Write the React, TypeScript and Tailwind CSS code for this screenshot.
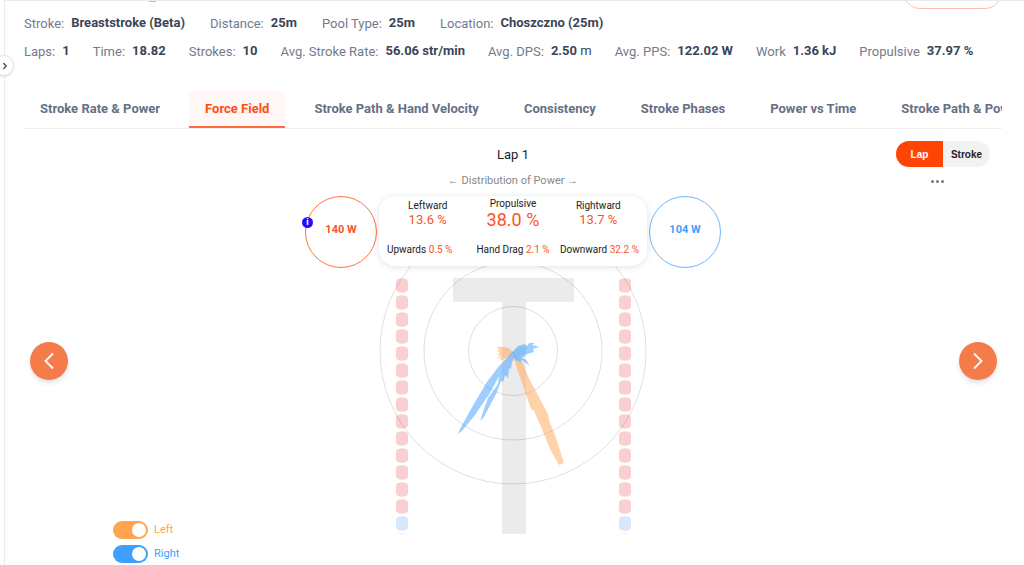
import { useState } from "react";
import { ChevronRight } from "lucide-react";
import clsx from "clsx";

interface Stat {
  label: string;
  value: string;
  unit?: string;
}

const SESSION: Stat[] = [
  { label: "Stroke:", value: "Breaststroke (Beta)" },
  { label: "Distance:", value: "25m" },
  { label: "Pool Type:", value: "25m" },
  { label: "Location:", value: "Choszczno (25m)" },
];

const SUMMARY: Stat[] = [
  { label: "Laps:", value: "1" },
  { label: "Time:", value: "18.82" },
  { label: "Strokes:", value: "10" },
  { label: "Avg. Stroke Rate:", value: "56.06 str/min" },
  { label: "Avg. DPS:", value: "2.50", unit: "m" },
  { label: "Avg. PPS:", value: "122.02 W" },
  { label: "Work", value: "1.36 kJ" },
  { label: "Propulsive", value: "37.97 %" },
];

const TABS = [
  "Stroke Rate & Power",
  "Force Field",
  "Stroke Path & Hand Velocity",
  "Consistency",
  "Stroke Phases",
  "Power vs Time",
  "Stroke Path & Power",
];

function StatRow({ items, className }: { items: Stat[]; className: string }) {
  return (
    <dl className={clsx("flex whitespace-nowrap text-[13px] leading-5", className)}>
      {items.map((item) => (
        <div key={item.label} className="flex gap-[7px]">
          <dt className="leading-[22px] text-[#737b8b]">{item.label}</dt>
          <dd className="font-bold text-[#3b4558]">
            {item.value}
            {item.unit && <span className="font-normal"> {item.unit}</span>}
          </dd>
        </div>
      ))}
    </dl>
  );
}

function Metric({ label, value, big }: { label: string; value: string; big?: boolean }) {
  return (
    <div className={clsx("flex flex-col items-center", !big && "pt-[2px]")}>
      <span className="text-[10px] leading-3 text-[#222]">{label}</span>
      <span className={clsx("text-[#f9531f]", big ? "text-[18px] leading-5" : "text-[13px] leading-4")}>{value}</span>
    </div>
  );
}

function MinorMetric({ label, value }: { label: string; value: string }) {
  return (
    <span className="text-[10px] leading-3 text-[#222]">
      {label} <span className="text-[#f9531f]">{value}</span>
    </span>
  );
}

function NavButton({ direction }: { direction: "left" | "right" }) {
  return (
    <button
      type="button"
      aria-label={direction === "left" ? "Previous lap" : "Next lap"}
      className="flex size-[38px] items-center justify-center rounded-full bg-[#f47c4b] text-white shadow-md shadow-black/10"
    >
      <svg width="10" height="18" viewBox="0 0 10 18" fill="none" stroke="currentColor" strokeWidth="1.8">
        <path d={direction === "left" ? "M9 1.500 1.500 9 9 16.500" : "M1 1.500 8.500 9 1 16.500"} />
      </svg>
    </button>
  );
}

function HandSwitch({
  label,
  checked,
  onChange,
  color,
}: {
  label: string;
  checked: boolean;
  onChange: (v: boolean) => void;
  color: "orange" | "blue";
}) {
  return (
    <label className={clsx("flex items-center gap-[6px] text-[11px] leading-[18px]", color === "orange" ? "text-[#ffa550]" : "text-[#409eff]")}>
      <input
        type="checkbox"
        role="switch"
        checked={checked}
        onChange={(e) => onChange(e.target.checked)}
        className={clsx(
          "flex h-[18px] w-[35px] appearance-none items-center rounded-full px-[2px] before:size-[14px] before:rounded-full before:bg-white checked:justify-end",
          color === "orange" ? "bg-[#ffa550]" : "bg-[#409eff]"
        )}
      />
      {label}
    </label>
  );
}

/** Column of lane rope floats, the last one in blue. */
function LaneRope({ x }: { x: number }) {
  return (
    <g>
      {Array.from({ length: 15 }, (_, i) => (
        <path
          key={i}
          transform={`translate(${x} ${12 + i * 17})`}
          d="M2.500 .7Q6-.2 9.500 .7 12 1.200 12 4V11Q12 13.800 9.500 14.300 6 15.200 2.500 14.300 0 13.800 0 11V4Q0 1.200 2.500 .7Z"
          fill={i === 14 ? "#d8e8fa" : "#f9cfd0"}
        />
      ))}
      <path d={`M${x + 2} 268Q${x + 6} 266 ${x + 10} 268Z`} fill="#eee" />
    </g>
  );
}

function ForceField({ left, right }: { left: boolean; right: boolean }) {
  return (
    <svg className="-mt-[2px] block" width="268" height="268" viewBox="379 266 268 268" role="img" aria-label="Force field">
      <g transform="translate(0 266)">
        <LaneRope x={396} />
        <LaneRope x={619} />
      </g>
      <path d="M453 278H574V302H526V534H502V302H453Z" fill="#ebebeb" />
      <g fill="none" stroke="#000" strokeOpacity=".13">
        <circle cx="513" cy="351" r="44.500" />
        <circle cx="513" cy="351" r="89" />
        <circle cx="513" cy="351" r="133" />
      </g>
      {left && (
        <g fill="#ff9c40" fillOpacity=".45">
          <path d="M513 352 518 361 522 361 527 374 533 386 541 401 548 414 549 420 556 438 564 463 559 465 550 449 542 429 534 411 531 409 525 392 520 377 514 359Z" />
          <path d="M513 352 509 348 503 347 497 347 499 350 497 351 500 353 497 355 501 355 496 359 502 357 499 361 506 358 511 356Z" />
        </g>
      )}
      {right && (
        <g fill="#3b9eff" fillOpacity=".5">
          <path d="M513 351 506 359 499 366 487 382 475 402 461 427 458 434 462 431 475 415 490 393 499 376 498 384 488 398 484 409 480 421 484 417 497 392 501 381 503 382 505 375 508 378 509 368 511 369 512 362 515 357Z" />
          <path d="M513 351 518 346 525 344 527 346 529 343 535 343 532 345 539 347 533 349 534 352 527 354 522 358 526 360 530 366 522 360 520 362 516 360Z" />
          <path d="M512 352 520 348 528 347 525 353 519 356 521 361 515 360Z" fillOpacity=".15" />
        </g>
      )}
    </svg>
  );
}

export default function App() {
  const [activeTab, setActiveTab] = useState("Force Field");
  const [mode, setMode] = useState("Lap");
  const [showLeft, setShowLeft] = useState(true);
  const [showRight, setShowRight] = useState(true);

  return (
    <div className="relative ml-1 min-h-screen overflow-hidden border-t border-l border-[#ebebeb] bg-white pr-[22px] pl-[19px] font-[Roboto,Arial,sans-serif]">
      {/* Sidebar handle */}
      <button
        type="button"
        aria-label="Open sidebar"
        className="fixed top-[55px] -left-[7px] flex size-[21px] items-center justify-center rounded-full border border-[#e4e4ea] bg-white pl-[3px] text-[#444] shadow-sm"
      >
        <ChevronRight size={10} strokeWidth={3} />
      </button>
      {/* Bottoms of the title and the action button scrolled under the top edge */}
      <div className="absolute -top-px left-[144px] h-[2px] w-[7px] bg-[#bbb]" />
      <button type="button" aria-label="Export" className="absolute -top-[26px] right-[22px] h-[34px] w-[99px] rounded-full border border-[#ffc0aa]" />

      <header className="flex flex-col gap-[6px] pt-3">
        <StatRow items={SESSION} className="gap-[25px]" />
        <StatRow items={SUMMARY} className="gap-[23px]" />
      </header>

      <nav className="mt-7 flex gap-[13px] overflow-hidden border-b border-[#f0f0f2] whitespace-nowrap">
        {TABS.map((tab) => (
          <button
            key={tab}
            type="button"
            onClick={() => setActiveTab(tab)}
            className={clsx(
              "h-[37px] shrink-0 border-b-2 px-4 text-[13px] leading-5 font-bold",
              tab === activeTab ? "border-[#ff6a3c] bg-[#fff8f6] text-[#ff4d12]" : "border-transparent text-[#667085]"
            )}
          >
            {tab}
          </button>
        ))}
      </nav>

      <main className="grid grid-cols-[1fr_auto_1fr]">
        <section className="flex flex-col pt-[213px]">
          <div className="pl-[6px]">
            <NavButton direction="left" />
          </div>
          <div className="mt-auto flex flex-col gap-[6px] pl-[89px]">
            <HandSwitch label="Left" checked={showLeft} onChange={setShowLeft} color="orange" />
            <HandSwitch label="Right" checked={showRight} onChange={setShowRight} color="blue" />
          </div>
        </section>

        <section className="flex flex-col items-center pb-[29px]">
          <h1 className="mt-4 text-[13px] leading-5 text-[#222]">Lap 1</h1>
          <p className="mt-[6px] text-[11px] leading-5 text-[#888]">← Distribution of Power →</p>
          <div className="mt-[5px] flex items-center gap-[2px]">
            <div className="relative flex size-[72px] items-center justify-center rounded-full border border-[#ff6f42] pb-1 text-[11px] font-bold text-[#f9531f]">
              140 W
              <button type="button" aria-label="Info" className="absolute top-5 -left-1 flex size-[11px] items-center justify-center rounded-full bg-[#2410f0] text-[9px] leading-none font-bold text-white">
                i
              </button>
            </div>
            <div className="z-10 flex h-[70px] w-[268px] flex-col justify-between self-start rounded-2xl bg-white px-2 pt-[2px] pb-[10px] shadow-[0_1px_6px_rgba(0,0,0,0.12)]">
              <div className="grid grid-cols-3 gap-1">
                <Metric label="Leftward" value="13.6 %" />
                <Metric label="Propulsive" value="38.0 %" big />
                <Metric label="Rightward" value="13.7 %" />
              </div>
              <div className="grid grid-cols-[1fr_auto_1fr] whitespace-nowrap">
                <MinorMetric label="Upwards" value="0.5 %" />
                <MinorMetric label="Hand Drag" value="2.1 %" />
                <div className="flex justify-end">
                  <MinorMetric label="Downward" value="32.2 %" />
                </div>
              </div>
            </div>
            <div className="flex size-[72px] items-center justify-center rounded-full border border-[#6db6ff] pb-1 text-[11px] font-bold text-[#409eff]">
              104 W
            </div>
          </div>
          <ForceField left={showLeft} right={showRight} />
        </section>

        <section className="flex flex-col items-end pt-3">
          <div className="mr-3 flex h-[26px] overflow-hidden rounded-full bg-[#f2f2f2] font-['Liberation_Sans',Arial,sans-serif] text-[10px] font-bold">
            {["Lap", "Stroke"].map((m) => (
              <button
                key={m}
                type="button"
                onClick={() => setMode(m)}
                className={clsx("w-[47px]", mode === m ? "bg-[#ff4405] text-white" : "text-[#222]")}
              >
                {m}
              </button>
            ))}
          </div>
          <button type="button" aria-label="More options" className="mt-[10px] mr-[58px] flex h-2 items-center gap-[2px]">
            <span className="size-[3px] rounded-full bg-[#777]" />
            <span className="size-[3px] rounded-full bg-[#777]" />
            <span className="size-[3px] rounded-full bg-[#777]" />
          </button>
          <div className="mt-[157px] pr-[5px]">
            <NavButton direction="right" />
          </div>
        </section>
      </main>
    </div>
  );
}
